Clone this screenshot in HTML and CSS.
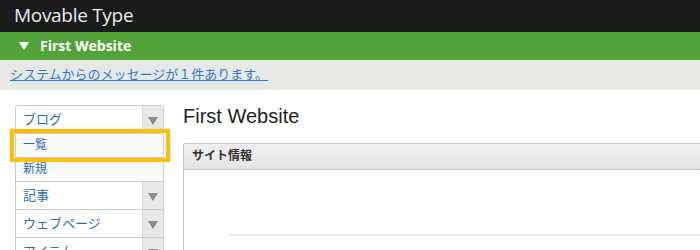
FILE: index.html
```html
<!DOCTYPE html>
<html>
<head>
    <meta charset="UTF-8">
    <title>Movable Type</title>
    <link rel="stylesheet" href="styles.css">
</head>
<body>
    <div class="brand">Movable Type</div>
    <div class="site-bar"><span class="caret"></span>First Website</div>
    <div class="msg-bar"><a href="#">システムからのメッセージが１件あります。</a></div>

    <div class="layout">
        <ul class="menu">
            <li class="menu-item">
                <a href="#">ブログ</a>
                <span class="toggle"><span class="arrow"></span></span>
            </li>
            <li class="sub-item current"><a href="#">一覧</a></li>
            <li class="sub-item"><a href="#">新規</a></li>
            <li class="menu-item">
                <a href="#">記事</a>
                <span class="toggle"><span class="arrow"></span></span>
            </li>
            <li class="menu-item">
                <a href="#">ウェブページ</a>
                <span class="toggle"><span class="arrow"></span></span>
            </li>
            <li class="menu-item">
                <a href="#">アイテム</a>
                <span class="toggle"><span class="arrow"></span></span>
            </li>
        </ul>

        <div class="content">
            <h1>First Website</h1>
            <div class="widget">
                <div class="widget-head">サイト情報</div>
                <div class="widget-body">
                    <div class="rule"></div>
                </div>
            </div>
        </div>
    </div>
</body>
</html>
```

FILE: styles.css
```css
body {
    margin: 0;
    font-family: "Liberation Sans", "Noto Sans CJK JP", sans-serif;
    background: #fff;
    overflow: hidden;
}
a {
    text-decoration: none;
}
.brand {
    height: 32px;
    background: #1b1b1b;
    color: #ececec;
    font-family: "Open Sans", sans-serif;
    font-size: 19px;
    line-height: 31px;
    padding-left: 14px;
    letter-spacing: -0.3px;
}
.site-bar {
    height: 28px;
    background: #52a43a;
    color: #fff;
    font-family: "Open Sans", sans-serif;
    font-weight: bold;
    font-size: 14px;
    line-height: 28px;
    padding-left: 19px;
    display: flex;
    align-items: center;
}
.caret {
    width: 0;
    height: 0;
    border-left: 5px solid transparent;
    border-right: 5px solid transparent;
    border-top: 8px solid #fff;
    margin-right: 11px;
}
.msg-bar {
    height: 30px;
    background: #e6e8e3;
    padding-left: 10px;
    line-height: 30px;
    font-size: 13px;
}
.msg-bar a {
    color: #2a7ad3;
    text-decoration: underline;
}
.layout {
    display: flex;
    padding: 15px 0 0 15px;
}
.menu {
    list-style: none;
    margin: 0;
    padding: 0;
    width: 149px;
    flex: none;
}
.menu li {
    display: flex;
    border: 1px solid #cacdd0;
    border-top: none;
    background: #fff;
}
.menu li:first-child {
    border-top: 1px solid #cacdd0;
    border-radius: 3px 3px 0 0;
}
.menu-item {
    height: 27px;
}
.menu-item a {
    flex: 1;
    color: #1f6cb2;
    font-size: 13px;
    line-height: 27px;
    padding-left: 7px;
}
.toggle {
    width: 20px;
    border-left: 1px solid #d4d6d8;
    background: #e8e8e8;
    display: flex;
    justify-content: center;
    align-items: center;
}
.menu li:first-child .toggle {
    border-radius: 0 2px 0 0;
}
.arrow {
    width: 0;
    height: 0;
    border-left: 5px solid transparent;
    border-right: 5px solid transparent;
    border-top: 8px solid #8c8c8c;
    margin-top: 2px;
}
.sub-item {
    height: 23px;
    background: #fafafa !important;
}
.sub-item a {
    color: #2a6aa6;
    font-size: 12px;
    line-height: 23px;
    padding-left: 7px;
}
.menu .current {
    position: relative;
}
.menu .current::after {
    content: "";
    position: absolute;
    left: -6px;
    right: -7px;
    top: -5px;
    bottom: -5px;
    border: 4px solid #ffbf00;
}
.content {
    flex: 1;
    padding-left: 19px;
}
.content h1 {
    margin: 0;
    font-size: 20px;
    font-weight: normal;
    color: #222;
    line-height: 22px;
    height: 38px;
}
.widget {
    border: 1px solid #c5c5c5;
    border-right: none;
    border-radius: 3px 0 0 0;
}
.widget-head {
    height: 25px;
    background: linear-gradient(#eef0ef, #e4e4e4);
    border-bottom: 1px solid #c5c5c5;
    font-size: 12px;
    font-weight: bold;
    color: #333;
    line-height: 25px;
    padding-left: 8px;
}
.widget-body {
    height: 120px;
    padding: 64px 0 0 45px;
}
.rule {
    height: 2px;
    background: #e8e8e8;
}
```
